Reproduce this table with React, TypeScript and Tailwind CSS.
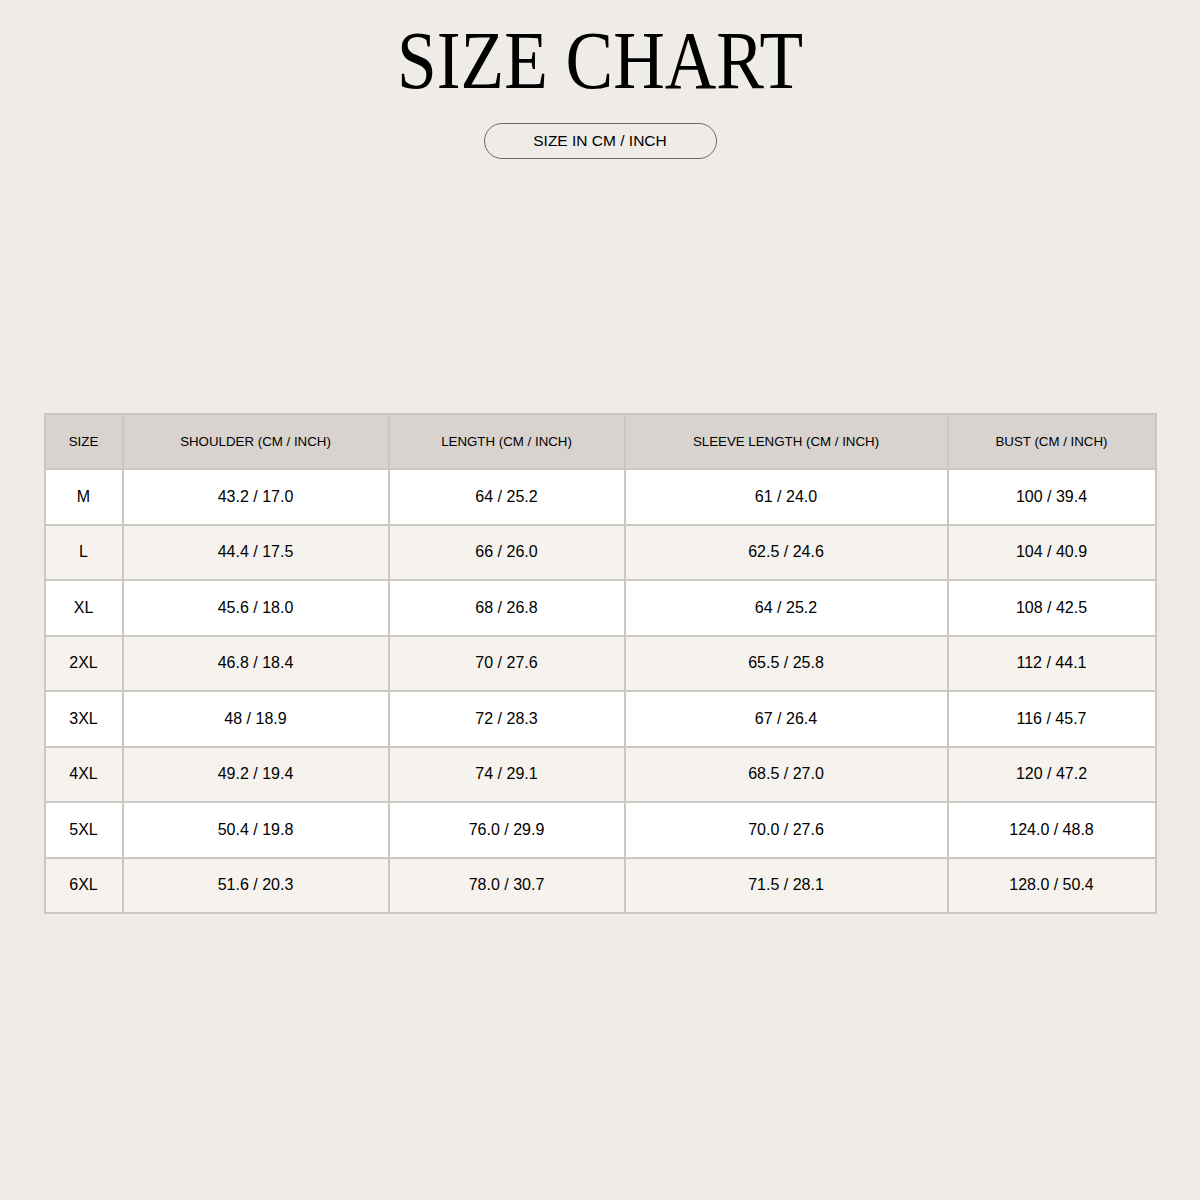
import React from "react";

const headers = ["SIZE", "SHOULDER (CM / INCH)", "LENGTH (CM / INCH)", "SLEEVE LENGTH (CM / INCH)", "BUST (CM / INCH)"];
const widths = ["w-[78px]", "w-[266px]", "w-[236px]", "w-[323px]", "w-[208px]"];
const rows = [
  ["M", "43.2 / 17.0", "64 / 25.2", "61 / 24.0", "100 / 39.4"],
  ["L", "44.4 / 17.5", "66 / 26.0", "62.5 / 24.6", "104 / 40.9"],
  ["XL", "45.6 / 18.0", "68 / 26.8", "64 / 25.2", "108 / 42.5"],
  ["2XL", "46.8 / 18.4", "70 / 27.6", "65.5 / 25.8", "112 / 44.1"],
  ["3XL", "48 / 18.9", "72 / 28.3", "67 / 26.4", "116 / 45.7"],
  ["4XL", "49.2 / 19.4", "74 / 29.1", "68.5 / 27.0", "120 / 47.2"],
  ["5XL", "50.4 / 19.8", "76.0 / 29.9", "70.0 / 27.6", "124.0 / 48.8"],
  ["6XL", "51.6 / 20.3", "78.0 / 30.7", "71.5 / 28.1", "128.0 / 50.4"],
];

export default function App() {
  return (
    <div className="w-[1200px] h-[1200px] bg-[#efece7] flex flex-col items-center text-black font-['Liberation_Sans',Arial,sans-serif]">
      <h1 className="mt-[18.5px] h-[83px] text-[83px] leading-none font-normal font-['Liberation_Serif','Times_New_Roman',serif] scale-x-[0.86] whitespace-nowrap">
        SIZE CHART
      </h1>
      <div className="mt-[21.5px] w-[233px] h-[36px] rounded-full border border-[#6b6866] flex items-center justify-center text-[15.5px]">
        SIZE IN CM / INCH
      </div>
      <table className="mt-[254px] w-[1111px] border-collapse border-2 border-[#cbc7c3] table-fixed">
        <colgroup>
          {widths.map((w, i) => (
            <col key={i} className={w} />
          ))}
        </colgroup>
        <thead>
          <tr className="bg-[#d8d3cf] h-[55px]">
            {headers.map((h) => (
              <th key={h} className="border-2 border-[#cbc7c3] font-normal text-[13.3px] text-center align-middle">
                {h}
              </th>
            ))}
          </tr>
        </thead>
        <tbody>
          {rows.map((r, i) => (
            <tr key={i} className={`h-[55.5px] ${i % 2 === 0 ? "bg-white" : "bg-[#f6f3ee]"}`}>
              {r.map((c, j) => (
                <td key={j} className="border-2 border-[#cbc7c3] text-[16px] text-center align-middle">
                  {c}
                </td>
              ))}
            </tr>
          ))}
        </tbody>
      </table>
    </div>
  );
}
